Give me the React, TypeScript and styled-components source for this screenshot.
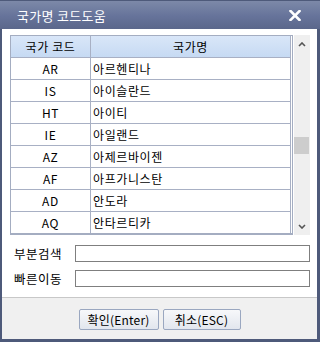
import React from "react";
import styled, { createGlobalStyle } from "styled-components";

const Global = createGlobalStyle`
  html, body { margin: 0; padding: 0; background: #fff; }
  * { box-sizing: border-box; }
  body { font-family: "Noto Sans CJK KR", "Noto Sans", sans-serif; }
`;

const Window = styled.div`
  width: 320px;
  height: 342px;
  background: #4e5a7a;
  display: flex;
  flex-direction: column;
  padding: 0 3px 3px 2px;
  font-size: 12px;
  color: #000;
`;

const TitleBar = styled.div`
  height: 29px;
  margin: 0 -3px 0 -2px;
  padding: 0 19px 0 17px;
  background: linear-gradient(#7d89a8, #66739a 55%, #5b678b);
  border-top: 1px solid #4e5a7a;
  display: flex;
  align-items: center;
  justify-content: space-between;
  color: #fff;
  font-size: 13px;
  letter-spacing: 0.3px;
`;

const CloseIcon = styled.svg`
  width: 12px;
  height: 11px;
  display: block;
`;

const Body = styled.div`
  background: #fff;
  padding: 6px 7px 0 8px;
  height: 268px;
  display: flex;
  flex-direction: column;
`;

const GridArea = styled.div`
  display: flex;
  gap: 1px;
  height: 200px;
`;

const TableBox = styled.div`
  width: 283px;
  border: 1px solid #a4adc1;
  border-bottom: 2px solid #a4adc1;
  padding-right: 1px;
  display: flex;
  flex-direction: column;
  overflow: hidden;
`;

const Row = styled.div<{ $header?: boolean }>`
  display: grid;
  grid-template-columns: 80px 200px;
  height: 22px;
  flex: none;
  background: ${(p) => (p.$header ? "linear-gradient(#d9e6f8, #c6daf3)" : "#fff")};
  border-bottom: 1px solid #a8b0c4;
`;

const Cell = styled.div<{ $align?: "left" | "center" }>`
  display: flex;
  align-items: center;
  justify-content: ${(p) => (p.$align === "left" ? "flex-start" : "center")};
  padding-left: ${(p) => (p.$align === "left" ? "2px" : "0")};
  border-right: 1px solid #a8b0c4;
  letter-spacing: 0.6px;
  white-space: nowrap;
  overflow: hidden;
  color: #000;
`;

const Scrollbar = styled.div`
  width: 16px;
  height: 200px;
  background: #efefef;
  position: relative;
  display: flex;
  flex-direction: column;
  justify-content: space-between;
  align-items: center;
  padding: 7px 0 6px;
`;

const Thumb = styled.div`
  position: absolute;
  left: 0;
  top: 102px;
  width: 15px;
  height: 17px;
  background: #cdcdcd;
`;

const Arrow = styled.svg`
  width: 8px;
  height: 5px;
  display: block;
`;

const Form = styled.div`
  margin-top: 10px;
  display: flex;
  flex-direction: column;
  gap: 8px;
`;

const FormRow = styled.div`
  display: flex;
  align-items: center;
  height: 17px;
`;

const Label = styled.div`
  width: 63px;
  padding-left: 4px;
  font-size: 12.5px;
  letter-spacing: 0.5px;
  white-space: nowrap;
  color: #000;
`;

const Input = styled.input`
  width: 235px;
  height: 17px;
  border: 1px solid #7f7f7f;
  margin-left: 2px;
  padding: 0 2px;
  font: inherit;
  outline: none;
  background: #fff;
`;

const Footer = styled.div`
  flex: 1;
  background: #f0f0f0;
  border-top: 1px solid #c8c8c8;
  display: flex;
  justify-content: center;
  align-items: flex-start;
  padding-top: 11px;
  gap: 4px;
`;

const Button = styled.button<{ $w: number }>`
  width: ${(p) => p.$w}px;
  height: 21px;
  border: 1px solid #9aa7c0;
  border-radius: 2px;
  background: linear-gradient(#f7f8fa, #e2e6ee);
  font-family: "Noto Sans CJK KR", "Noto Sans", sans-serif;
  font-size: 12px;
  padding: 0;
  color: #000;
  letter-spacing: 0.2px;
`;

const rows: [string, string][] = [
  ["AR", "아르헨티나"],
  ["IS", "아이슬란드"],
  ["HT", "아이티"],
  ["IE", "아일랜드"],
  ["AZ", "아제르바이젠"],
  ["AF", "아프가니스탄"],
  ["AD", "안도라"],
  ["AQ", "안타르티카"],
];

export default function App() {
  return (
    <>
      <Global />
      <Window>
        <TitleBar>
          <span>국가명 코드도움</span>
          <CloseIcon viewBox="0 0 12 11">
            <path d="M1.5 1 L10.5 10 M10.5 1 L1.5 10" stroke="#fff" strokeWidth="2.6" strokeLinecap="square" />
          </CloseIcon>
        </TitleBar>
        <Body>
          <GridArea>
            <TableBox>
              <Row $header>
                <Cell>국가 코드</Cell>
                <Cell>국가명</Cell>
              </Row>
              {rows.map(([code, name]) => (
                <Row key={code}>
                  <Cell>{code}</Cell>
                  <Cell $align="left">{name}</Cell>
                </Row>
              ))}
            </TableBox>
            <Scrollbar>
              <Arrow viewBox="0 0 8 5">
                <path d="M1 4 L4 1 L7 4" stroke="#555" strokeWidth="1.6" fill="none" />
              </Arrow>
              <Thumb />
              <Arrow viewBox="0 0 8 5">
                <path d="M1 1 L4 4 L7 1" stroke="#555" strokeWidth="1.6" fill="none" />
              </Arrow>
            </Scrollbar>
          </GridArea>
          <Form>
            <FormRow>
              <Label>부분검색</Label>
              <Input />
            </FormRow>
            <FormRow>
              <Label>빠른이동</Label>
              <Input />
            </FormRow>
          </Form>
        </Body>
        <Footer>
          <Button $w={80}>확인(Enter)</Button>
          <Button $w={78}>취소(ESC)</Button>
        </Footer>
      </Window>
    </>
  );
}
